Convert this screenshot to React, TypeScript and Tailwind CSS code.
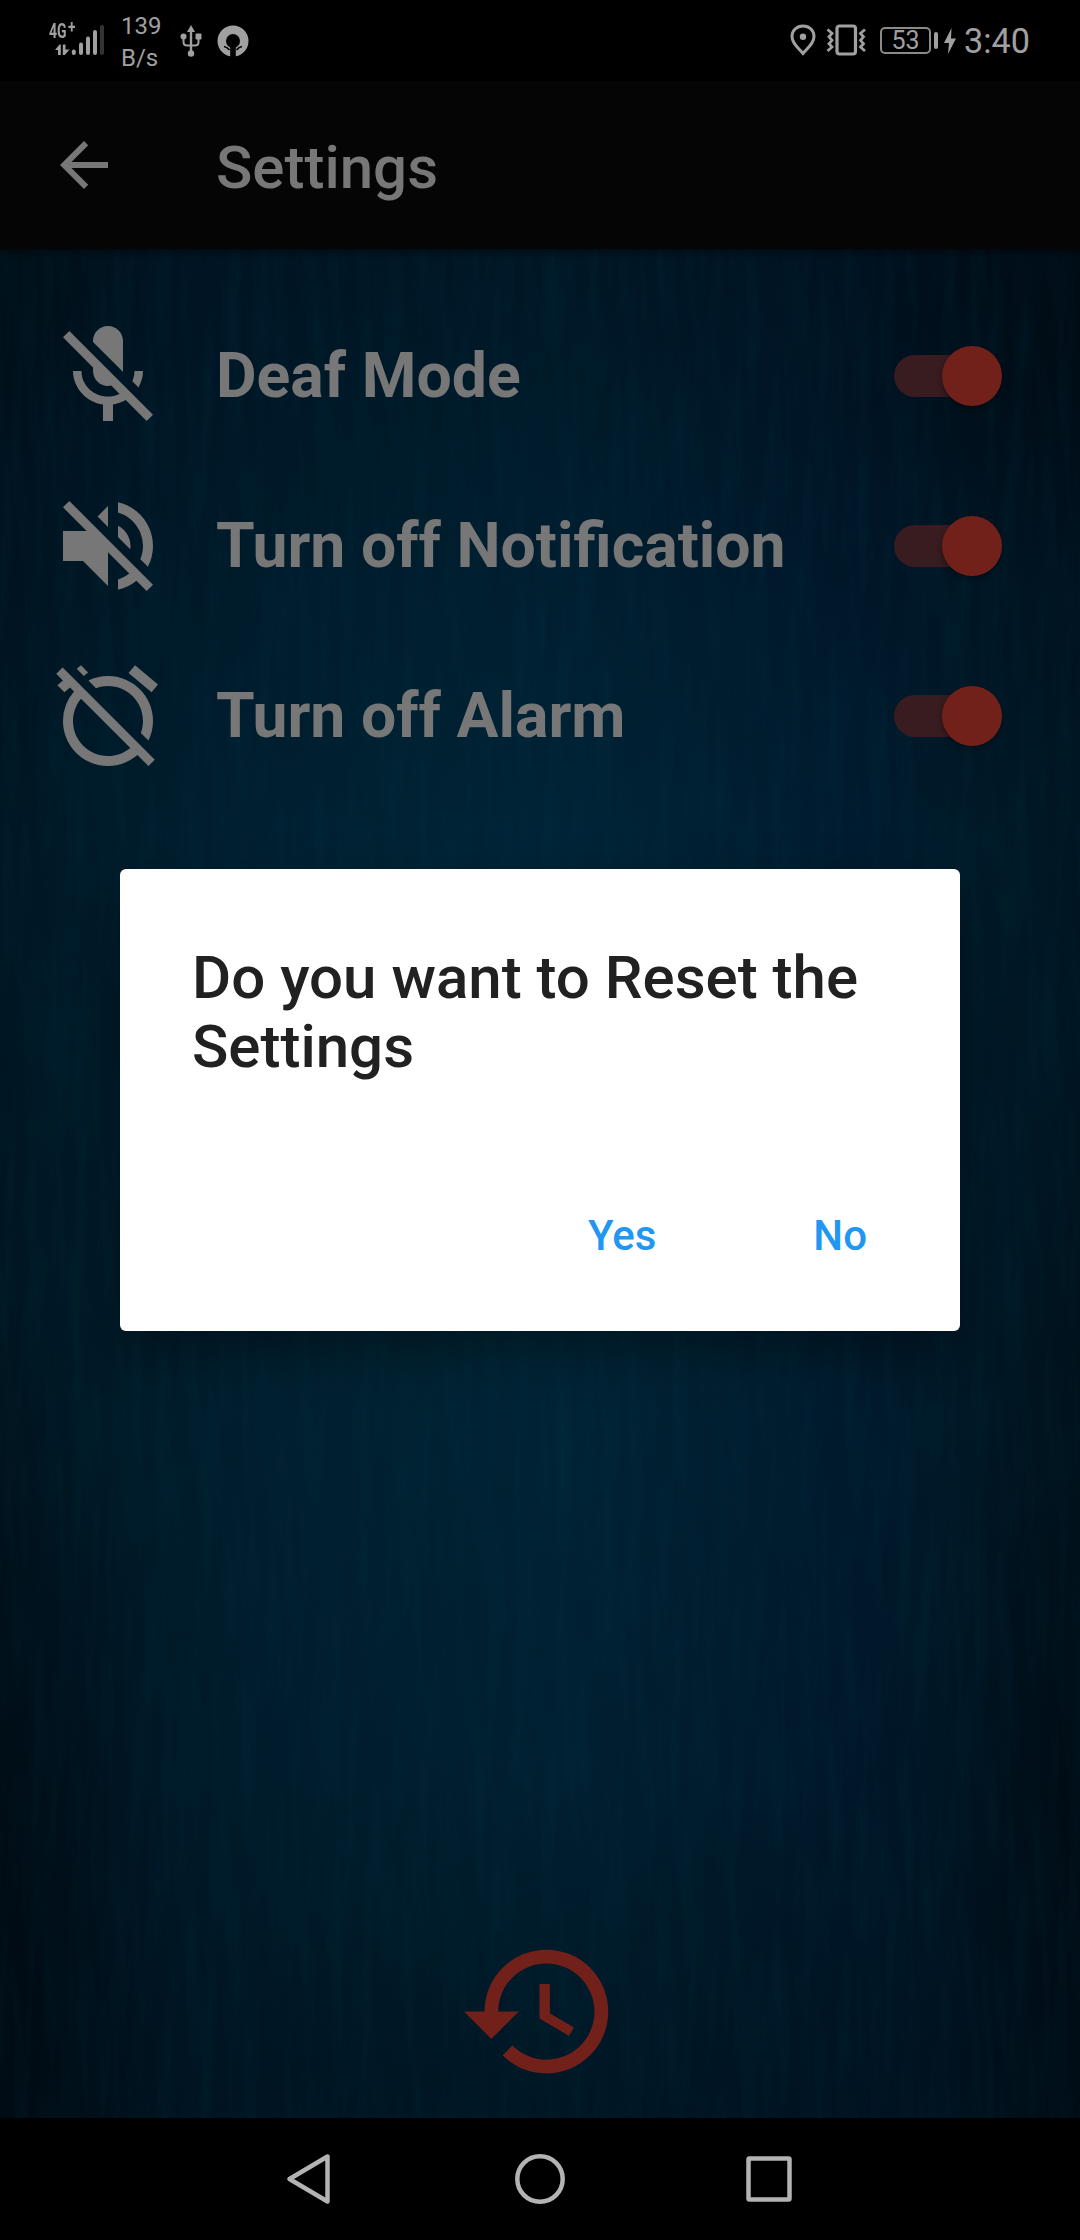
import React from "react";
import {
  MdArrowBack,
  MdMicOff,
  MdVolumeOff,
  MdAlarmOff,
  MdRestore,
} from "react-icons/md";

function Signal() {
  return (
    <svg width="57" height="34" viewBox="48 24 57 34" className="block">
      <path d="M59.5 44.5l-4.500 5.500h3v5h2.800V44.500zM62.800 44.500v10.500h2l4.700-5.500h-4v-5z" fill="#a0a0a0" />
      <g strokeWidth="4" strokeLinecap="round" stroke="#a0a0a0">
        <path d="M73.800 51.500v1.500" />
        <path d="M81 44.500v8.500" />
        <path d="M88 38.500v14.500" />
        <path d="M95 32v21" />
        <path d="M102 27v26" stroke="#333" />
      </g>
    </svg>
  );
}

function Usb() {
  return (
    <svg width="22" height="34" viewBox="0 0 22 34" className="block">
      <g fill="none" stroke="#a0a0a0" strokeWidth="2">
        <path d="M11 5v24" strokeWidth="2.400" />
        <path d="M3.500 12v6q0 3.500 3.500 3.500h8q3.500 0 3.500-3.500v-6" />
      </g>
      <g fill="#a0a0a0">
        <path d="M11 1l4 7H7z" />
        <circle cx="3.500" cy="12.500" r="3" />
        <rect x="15.500" y="9.500" width="6" height="6" rx="1" />
        <circle cx="11" cy="29.500" r="3.200" />
      </g>
    </svg>
  );
}

function RingBadge() {
  return (
    <svg width="32" height="32" viewBox="0 0 32 32" className="block">
      <circle cx="16" cy="16" r="15.500" fill="#a0a0a0" />
      <circle cx="16" cy="16" r="7" fill="#000" />
      <path d="M13.200 22h5.600v10h-5.600z" fill="#000" />
      <path d="M7 21.500q3 .5 5.500 3.500M25 21.500q-3 .5-5.500 3.500" stroke="#000" strokeWidth="1.600" fill="none" />
    </svg>
  );
}

function Pin() {
  return (
    <svg width="26" height="32" viewBox="0 0 26 32" className="block">
      <path
        d="M13 2C6.500 2 2 6.600 2 12.500c0 7 6.500 11.500 11 17 4.500-5.500 11-10 11-17C24 6.600 19.500 2 13 2z"
        fill="none"
        stroke="#a0a0a0"
        strokeWidth="3"
      />
      <circle cx="13" cy="12.700" r="3.200" fill="#a0a0a0" />
    </svg>
  );
}

function Vibrate() {
  return (
    <svg width="40" height="32" viewBox="0 0 40 32" className="block">
      <g fill="none" stroke="#a0a0a0">
        <rect x="11" y="2" width="18.500" height="28" rx="2.500" strokeWidth="3.200" />
        <path d="M1.500 5.500L6 9.300 3 12.800 6 16.300 3 19.800 6 23 1.500 27" strokeWidth="2.800" />
        <path d="M39 5.500L34.500 9.300l3 3.500-3 3.500 3 3.500-3 3.200 4.500 4" strokeWidth="2.800" />
      </g>
    </svg>
  );
}

function StatusBar() {
  return (
    <header className="flex h-[81px] items-start justify-between bg-black text-[#a0a0a0]">
      <div className="flex items-start">
        <div className="relative ml-[48px] mt-[24px]">
          <Signal />
          <span className="absolute left-[1px] top-[-2px] flex origin-left scale-x-[0.72] whitespace-nowrap text-[19.500px] font-bold leading-[20px]">
            4G<span className="ml-[2px] mt-[-5px] text-[19px]">+</span>
          </span>
        </div>
        <div className="ml-[16px] mt-[10px] w-[50px] text-[24px] leading-[32px]">
          <div>139</div>
          <div>B/s</div>
        </div>
        <div className="ml-[9px] mt-[24px]">
          <Usb />
        </div>
        <div className="ml-[15px] mt-[25px]">
          <RingBadge />
        </div>
      </div>
      <div className="flex items-start">
        <div className="mt-[24px]">
          <Pin />
        </div>
        <div className="ml-[10px] mt-[24px]">
          <Vibrate />
        </div>
        <div className="ml-[14px] mt-[27px] flex h-[27px] w-[51px] items-center justify-center rounded-[5px] border-2 border-[#8a8a8a] text-[25px] leading-[27px]">
          53
        </div>
        <div className="ml-[3px] mt-[32px] h-[17px] w-[4px] rounded-sm bg-[#a0a0a0]" />
        <svg width="12" height="26" viewBox="0 0 12 26" className="ml-[6px] mt-[28px] block">
          <path d="M7.500 0L0 15h5l-1 11 8-15.500H7z" fill="#a0a0a0" />
        </svg>
        <div className="ml-[8px] mt-[21px] w-[116px] text-[34.200px] leading-[41px]">3:40</div>
      </div>
    </header>
  );
}

function Toggle() {
  return (
    <div className="relative h-[60px] w-[108px]">
      <div className="absolute left-0 top-[9px] h-[42px] w-[99px] rounded-full bg-[#381c20]" />
      <div className="absolute right-0 top-0 size-[60px] rounded-full bg-[#712119] shadow-[0_3px_6px_rgba(0,0,0,0.4)]" />
    </div>
  );
}

const rows = [
  { label: "Deaf Mode", Icon: MdMicOff },
  { label: "Turn off Notification", Icon: MdVolumeOff },
  { label: "Turn off Alarm", Icon: MdAlarmOff },
];

function Backdrop() {
  return (
    <>
      <div className="absolute inset-0 bg-[linear-gradient(90deg,#00101a_0%,#001522_6%,#001c2c_22%,#002131_38%,#002335_52%,#001d2f_66%,#00172a_80%,#001421_91%,#000f19_100%)]" />
      <div className="absolute inset-0 bg-[linear-gradient(180deg,rgba(0,16,30,0.7)_0%,rgba(0,20,36,0.4)_15%,rgba(0,40,60,0.25)_32%,rgba(0,38,54,0.2)_60%,rgba(0,22,38,0.3)_82%,rgba(0,16,28,0.7)_100%)]" />
      <div className="absolute inset-0 bg-[radial-gradient(ellipse_300px_260px_at_1080px_60px,rgba(0,8,14,0.6),transparent),radial-gradient(ellipse_180px_700px_at_0px_1750px,rgba(0,8,14,0.7),transparent),radial-gradient(ellipse_140px_700px_at_1080px_1600px,rgba(0,8,14,0.6),transparent),radial-gradient(ellipse_160px_240px_at_0px_0px,rgba(0,14,18,0.6),transparent)]" />
      <svg className="absolute inset-0 size-full opacity-[0.14]">
        <filter id="grain" x="0" y="0" width="100%" height="100%" colorInterpolationFilters="sRGB">
          <feTurbulence type="fractalNoise" baseFrequency="0.07 0.007" numOctaves="4" seed="7" />
          <feColorMatrix values="0 0 0 0 0  0 0 0 0 0.25  0 0 0 0 0.32  2 0 0 0 -0.7" />
        </filter>
        <rect width="100%" height="100%" filter="url(#grain)" />
      </svg>
      <div className="absolute inset-x-0 top-0 h-[10px] bg-gradient-to-b from-black/40 to-transparent" />
    </>
  );
}

export default function App() {
  return (
    <div className="relative flex h-[2240px] w-[1080px] flex-col overflow-hidden bg-black font-['Roboto',sans-serif]">
      <StatusBar />
      <div className="flex h-[168px] items-center bg-[#050505] text-[#777777]">
        <MdArrowBack className="ml-[48px] size-[72px]" />
        <h1 className="ml-[96px] mt-[5px] text-[60px] font-medium leading-[70px]">Settings</h1>
      </div>
      <main className="relative flex-1">
        <Backdrop />
        <div className="relative flex h-full flex-col items-center pt-[42px]">
          {rows.map(({ label, Icon }) => (
            <div key={label} className="flex h-[170px] w-full items-center pl-[48px] pr-[78px] text-[#777777]">
              <Icon className="size-[120px] shrink-0" />
              <span className="ml-[48px] flex-1 text-[62.500px] font-bold leading-[74px]">{label}</span>
              <Toggle />
            </div>
          ))}
          <MdRestore className="mb-[24px] mr-px mt-auto size-[165px] text-[#712119]" />
        </div>
      </main>
      <nav className="flex h-[122px] items-center justify-center bg-black">
        <svg width="520" height="60" viewBox="280 2149 520 60">
          <g fill="none" stroke="#b3b3b3" strokeWidth="4.500" strokeLinejoin="round">
            <path d="M327.500 2156.500v45L289.500 2179z" />
            <circle cx="540" cy="2179" r="22.700" />
            <rect x="748.500" y="2158.500" width="41" height="41" rx="1" />
          </g>
        </svg>
      </nav>
      <div className="absolute inset-x-0 bottom-[122px] top-[81px] flex items-center justify-center">
        <section className="flex h-[462px] w-[840px] flex-col rounded-[6px] bg-white px-[72px] pt-[74px] shadow-[0_20px_50px_rgba(0,0,0,0.35)]">
          <h2 className="text-[60px] font-medium leading-[69px] text-[#212121]">Do you want to Reset the Settings</h2>
          <div className="mt-[130px] flex justify-end text-[42px] font-medium leading-[49px] text-[#2196f3]">
            <button className="mr-[157px]">Yes</button>
            <button className="mr-[21px]">No</button>
          </div>
        </section>
      </div>
    </div>
  );
}
